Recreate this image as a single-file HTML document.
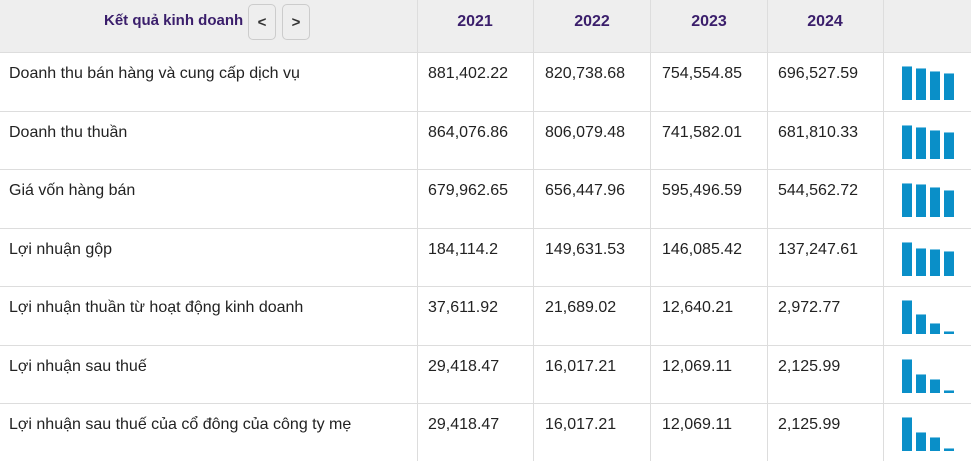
<!DOCTYPE html><html><head><style>
body{margin:0;width:971px;height:461px;overflow:hidden;background:#fff;font-family:"Liberation Sans",Arial,sans-serif;}
.hd{position:absolute;left:0;top:0;width:971px;height:52px;background:#eeeeee;border-bottom:1px solid #ddd;}
.vl{position:absolute;top:0;width:1px;height:461px;background:#ddd;}
.hl{position:absolute;left:0;width:971px;height:1px;background:#ddd;}
.t{position:absolute;font-size:16px;color:#222;}
.y{position:absolute;top:13px;font-size:16px;font-weight:bold;color:#3a1e6b;width:116px;text-align:center;}
.btn{position:absolute;top:4px;width:28px;height:36px;border:1px solid #ccc;border-radius:5px;font-size:15px;font-weight:bold;color:#333;text-align:center;line-height:36px;box-sizing:border-box;}
.b{position:absolute;width:10px;background:#0a8fc8;border-top:1px solid #7cc4e3;box-sizing:border-box;}
</style></head><body>
<div class="hd"></div>
<div class="t" style="left:104px;top:12px;font-weight:bold;font-size:15px;color:#3a1e6b">Kết quả kinh doanh</div>
<div class="btn" style="left:248px">&lt;</div>
<div class="btn" style="left:282px">&gt;</div>
<div class="y" style="left:417px">2021</div>
<div class="y" style="left:534px">2022</div>
<div class="y" style="left:651px">2023</div>
<div class="y" style="left:767px">2024</div>
<div class="vl" style="left:417px"></div><div class="vl" style="left:533px"></div><div class="vl" style="left:650px"></div><div class="vl" style="left:767px"></div><div class="vl" style="left:883px"></div>
<div id="rows"></div>
<script>
var d=[["Doanh thu bán hàng và cung cấp dịch vụ","881,402.22","820,738.68","754,554.85","696,527.59"],
["Doanh thu thuần","864,076.86","806,079.48","741,582.01","681,810.33"],
["Giá vốn hàng bán","679,962.65","656,447.96","595,496.59","544,562.72"],
["Lợi nhuận gộp","184,114.2","149,631.53","146,085.42","137,247.61"],
["Lợi nhuận thuần từ hoạt động kinh doanh","37,611.92","21,689.02","12,640.21","2,972.77"],
["Lợi nhuận sau thuế","29,418.47","16,017.21","12,069.11","2,125.99"],
["Lợi nhuận sau thuế của cổ đông của công ty mẹ","29,418.47","16,017.21","12,069.11","2,125.99"]];
var h="",xs=[9,428,545,662,778];
d.forEach(function(r,i){var top=53+i*58.5;
if(i>0)h+='<div class="hl" style="top:'+(top-1)+'px"></div>';
r.forEach(function(c,j){h+='<div class="t" style="left:'+xs[j]+'px;top:'+(top+12)+'px">'+c+'</div>';});
var v=r.slice(1).map(function(s){return parseFloat(s.replace(/,/g,''))});var m=Math.max.apply(null,v);
v.forEach(function(x,k){var ht=Math.max(3,Math.round(x/m*34));h+='<div class="b" style="left:'+(902+k*14)+'px;top:'+(top+47-ht)+'px;height:'+ht+'px"></div>';});
});
document.getElementById("rows").innerHTML=h;
</script>
</body></html>
